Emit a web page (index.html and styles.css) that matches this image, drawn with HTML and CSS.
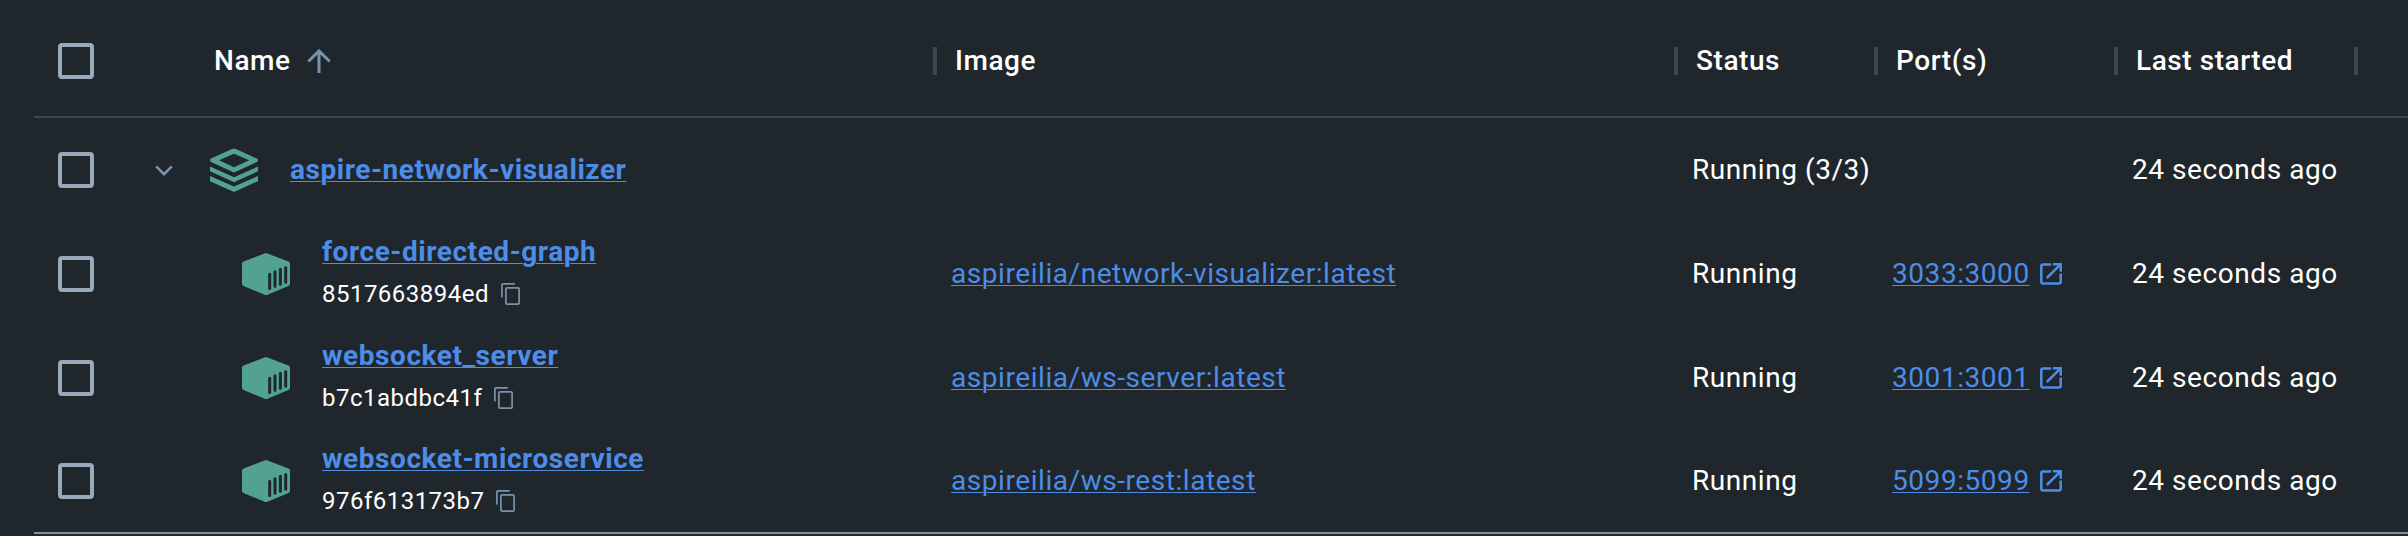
FILE: index.html
```html
<!DOCTYPE html>
<html lang="en">
<head>
<meta charset="utf-8">
<title>Containers</title>
<link rel="stylesheet" href="styles.css">
</head>
<body>
<svg class="sprite" aria-hidden="true">
  <symbol id="layers" viewBox="0 0 48 44">
    <path fill-rule="evenodd" d="M24 .4 26 1.1 47 10.6Q48 11.3 48 12.3T47 14L24 24.4 1 14Q0 13.300 0 12.300T1 10.600L22 1.100ZM24 5.700 9 12.300 24 19.300 39.200 12.300Z"/>
    <path d="M0 18.500 24 29.200 48 18.500V23.300L24 34.200 0 23.300ZM0 28 24 38.600 48 28V33.200L24 44 0 33.200Z"/>
  </symbol>
  <symbol id="container" viewBox="0 0 48 44">
    <path d="M22.500 1.500Q24 .6 25.500 1.500L46.500 9.600Q48 10.300 48 11.500V32Q48 33.200 46.500 34L25.500 42.700Q24 43.400 22.500 42.700L1.500 34Q0 33.200 0 32V11.500Q0 10.300 1.500 9.600Z"/>
    <path class="slats" d="M27.700 22.200V36.600M33 19.700V34.300M38.400 17.300V32.200M43.700 15.600V30.200"/>
  </symbol>
  <symbol id="copy" viewBox="0 0 24 24">
    <path d="M2.900 15.500V3Q2.900 1.900 4 1.900H15.800"/>
    <rect x="6.900" y="5.900" width="13.200" height="16.200" rx="1.200"/>
  </symbol>
  <symbol id="external" viewBox="0 0 22 22">
    <path d="M11 1.600H3Q1.300 1.600 1.300 3.300V18.700Q1.300 20.400 3 20.400H19Q20.700 20.400 20.700 18.700V10.600M12.800 1.300H20.700V8.700M20.300 1.700 6.800 15"/>
  </symbol>
</svg>
<main class="table">
  <header class="row head">
    <span class="check"></span>
    <div class="name"><span>Name</span><svg class="sort" viewBox="0 0 24 24"><path d="M12 24V2M1.300 12.500 12 1.900 22.700 12.500"/></svg></div>
    <div class="cell">Image</div>
    <div class="cell">Status</div>
    <div class="cell">Port(s)</div>
    <div class="cell">Last started</div>
    <div class="cell"></div>
  </header>
  <section class="row group">
    <span class="check"></span>
    <div class="name"><svg class="chevron" viewBox="0 0 18 11"><path d="M1.200 1.300 9 9.200 16.800 1.300"/></svg><svg class="icon"><use href="#layers"/></svg><a class="title">aspire-network-visualizer</a></div>
    <div class="cell"></div>
    <div class="cell">Running (3/3)</div>
    <div class="cell"></div>
    <div class="cell">24 seconds ago</div>
  </section>
  <section class="row child">
    <span class="check"></span>
    <div class="name"><svg class="icon"><use href="#container"/></svg><div class="info"><a class="title">force-directed-graph</a><div class="id">8517663894ed<svg class="copy"><use href="#copy"/></svg></div></div></div>
    <div class="cell"><a>aspireilia/network-visualizer:latest</a></div>
    <div class="cell">Running</div>
    <div class="cell"><a>3033:3000</a><svg class="external"><use href="#external"/></svg></div>
    <div class="cell">24 seconds ago</div>
  </section>
  <section class="row child">
    <span class="check"></span>
    <div class="name"><svg class="icon"><use href="#container"/></svg><div class="info"><a class="title">websocket_server</a><div class="id">b7c1abdbc41f<svg class="copy"><use href="#copy"/></svg></div></div></div>
    <div class="cell"><a>aspireilia/ws-server:latest</a></div>
    <div class="cell">Running</div>
    <div class="cell"><a>3001:3001</a><svg class="external"><use href="#external"/></svg></div>
    <div class="cell">24 seconds ago</div>
  </section>
  <section class="row child last">
    <span class="check"></span>
    <div class="name"><svg class="icon"><use href="#container"/></svg><div class="info"><a class="title">websocket-microservice</a><div class="id">976f613173b7<svg class="copy"><use href="#copy"/></svg></div></div></div>
    <div class="cell"><a>aspireilia/ws-rest:latest</a></div>
    <div class="cell">Running</div>
    <div class="cell"><a>5099:5099</a><svg class="external"><use href="#external"/></svg></div>
    <div class="cell">24 seconds ago</div>
  </section>
</main>
</body>
</html>
```
FILE: styles.css
```css
body {
  margin: 0;
  height: 536px;
  overflow: hidden;
  background: #1f262c;
  color: #fff;
  font: 400 28px/40px Roboto, sans-serif;
  letter-spacing: 0.56px;
}
.sprite { display: none; }
.table { padding-left: 34px; }
.row {
  box-sizing: border-box;
  display: grid;
  grid-template-columns: 121px 780px 741px 200px 240px 240px 52px;
  height: 104px;
  align-items: center;
}
.head {
  height: 118px;
  padding-top: 6px;
  border-bottom: 2px solid #3b4853;
  font-weight: 500;
}
.last { border-bottom: 2px solid #7a93ad; }
.check {
  box-sizing: border-box;
  width: 36px;
  height: 36px;
  margin-left: 24px;
  border: 4px solid #98a9bc;
  border-radius: 4px;
}
.name, .cell { display: flex; align-items: center; white-space: nowrap; }
.cell { padding-left: 16px; height: 40px; }
.head .name { padding-left: 59px; }
.head .cell {
  height: 28px;
  margin-left: -2px;
  padding-left: 18px;
  border-left: 4px solid #3b4853;
}
a {
  color: #4d8de8;
  text-decoration: underline;
  text-decoration-thickness: 1px;
  text-underline-offset: 2px;
}
.title { font-weight: 700; }
.sort, .chevron, .copy, .external { fill: none; stroke: #7a93ad; }
.sort { width: 24px; height: 24px; margin-left: 16px; stroke-width: 3; }
.chevron { width: 18px; height: 11px; margin-right: 37px; stroke-width: 2.6; }
.icon { width: 48px; height: 44px; margin-right: 32px; fill: #52a28f; }
.child .name { padding-left: 87px; }
.slats { fill: none; stroke: #1f262c; stroke-width: 3; stroke-linecap: round; }
.info { display: grid; row-gap: 2px; margin-top: -2px; }
.id {
  display: flex;
  align-items: center;
  font-size: 24px;
  letter-spacing: 0.48px;
}
.copy { width: 24px; height: 24px; margin-left: 10px; stroke-width: 1.7; }
.external { width: 22px; height: 22px; margin-left: 10px; stroke: #4d8de8; stroke-width: 2.5; }
```
